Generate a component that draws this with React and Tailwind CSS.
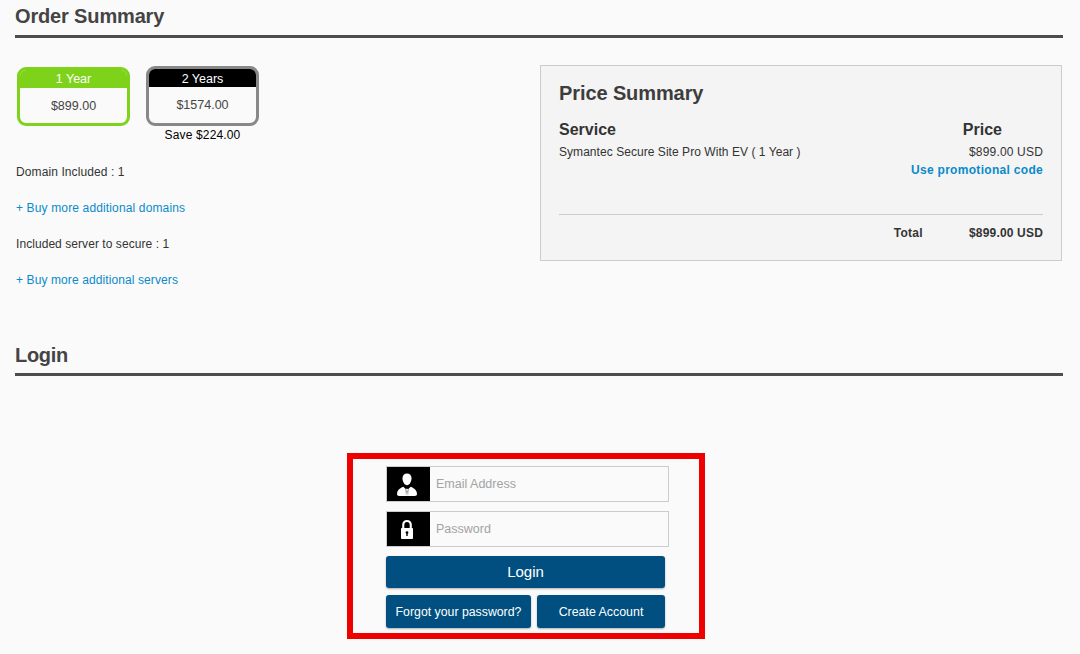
import React from 'react';

const PlanCard = ({ label, price, border, head, className }) => (
    <div className={`w-[113px] border-[3px] rounded-[9px] overflow-hidden bg-[#fafafa] ${border} ${className}`}>
        <div className={`h-[18px] text-center text-white text-[12.5px] ${head}`}>{label}</div>
        <div className="h-[38px] text-center text-[12.5px] leading-[36px] text-[#444]">{price}</div>
    </div>
);

const UserIcon = () => (
    <svg width="20" height="23" viewBox="0 0 20 23" fill="#fff">
        <path d="M10 0.500c2.700 0 4.500 2 4.500 4.800 0 3.200-1.900 7-4.500 7s-4.500-3.800-4.500-7C5.500 2.500 7.300 0.500 10 0.500z" />
        <path d="M6.300 13.800l2.400 2.200 0.300 7H2.300C0.800 23 0 22.200 0 21c0-3.500 2.800-5.800 6.300-7.200z" />
        <path d="M13.700 13.800l-2.400 2.200-0.300 7h6.700c1.500 0 2.300-0.800 2.300-2 0-3.500-2.800-5.800-6.300-7.200z" />
        <path d="M9.300 15.800h1.400l0.300 1.300-0.400 0.900 0.400 5H9l0.400-5-0.400-0.900z" />
    </svg>
);

const LockIcon = () => (
    <svg width="12" height="19" viewBox="0 0 12 19" fill="#fff">
        <path fillRule="evenodd" d="M6 0c2.900 0 4.800 2 4.800 4.800V8h0.400c0.500 0 0.800 0.300 0.800 0.800v9.400c0 0.500-0.300 0.800-0.800 0.800H0.800C0.300 19 0 18.700 0 18.200V8.800C0 8.300 0.300 8 0.800 8h0.400V4.800C1.200 2 3.100 0 6 0zM3.300 8h5.400V4.900C8.700 3.200 7.700 2.100 6 2.100S3.300 3.200 3.300 4.900V8zM6 11.200c-0.800 0-1.400 0.600-1.400 1.300 0 0.500 0.300 1 0.700 1.200V16h1.400v-2.300c0.400-0.200 0.700-0.700 0.700-1.200 0-0.700-0.600-1.300-1.400-1.300z" />
    </svg>
);

const Field = ({ icon, placeholder, type, className }) => (
    <div className={`w-[283px] h-[36px] flex border border-[#ccc] bg-[#fafafa] ${className}`}>
        <div className="w-[43px] pr-[3px] bg-black flex items-center justify-center shrink-0">{icon}</div>
        <input
            type={type}
            placeholder={placeholder}
            className="flex-1 min-w-0 pl-[6px] text-[12.5px] bg-transparent outline-none placeholder:text-[#a3a3a3]"
        />
    </div>
);

const App = () => {
    return (
        <div className="w-[1080px] h-[654px] overflow-hidden bg-[#fafafa] px-[15px] font-['Liberation_Sans',Arial,sans-serif] text-[#333]">
            <h2 className="h-[38px] pt-[4px] border-b-[3px] border-[#4d4d4d] text-[20px] leading-[24px] font-bold text-[#444] w-[1048px] tracking-[-0.15px]">Order Summary</h2>

            <div className="flex justify-between w-[1047px] pt-[27px] h-[305px]">
                <div className="pl-[2px]">
                    <div className="flex items-start">
                        <div className="pt-[2px]">
                            <PlanCard label="1 Year" price="$899.00" border="border-[#7ed31a]" head="bg-[#7ed31a] leading-[18px]" className="h-[59px]" />
                        </div>
                        <div className="ml-[16px] pt-[1px]">
                            <PlanCard label="2 Years" price="$1574.00" border="border-[#888]" head="bg-black leading-[20px]" className="h-[60px]" />
                            <div className="text-center text-[12px] leading-[18px] text-black tracking-[0.15px]">Save $224.00</div>
                        </div>
                    </div>
                    <div className="-ml-[1px] mt-[19px] text-[12px] leading-[18px] text-[#333] tracking-[0.1px]">Domain Included : 1</div>
                    <a className="-ml-[1px] block mt-[18px] text-[12px] leading-[18px] text-[#0a8acb] tracking-[0.14px]">+ Buy more additional domains</a>
                    <div className="-ml-[1px] mt-[18px] text-[12px] leading-[18px] text-[#333] tracking-[0.06px]">Included server to secure : 1</div>
                    <a className="-ml-[1px] block mt-[18px] text-[12px] leading-[18px] text-[#0a8acb] tracking-[0.1px]">+ Buy more additional servers</a>
                </div>

                <div className="w-[522px] h-[196px] border border-[#ccc] bg-[#f4f4f4] px-[18px] pt-[14px]">
                    <h3 className="text-[20px] leading-[26px] font-bold text-[#3d3d3d] tracking-[-0.1px]">Price Summary</h3>
                    <div className="flex justify-between mt-[15px]">
                        <div>
                            <div className="text-[16px] leading-[18px] font-bold">Service</div>
                            <div className="mt-[5px] text-[12px] leading-[16px] tracking-[0.05px]">Symantec Secure Site Pro With EV ( 1 Year )</div>
                        </div>
                        <div className="text-right">
                            <div className="text-[16px] leading-[18px] font-bold pr-[41px]">Price</div>
                            <div className="mt-[5px] text-[12px] leading-[16px] tracking-[0.18px]">$899.00 USD</div>
                            <a className="block mt-[2px] text-[12px] leading-[16px] font-bold text-[#0a8acb] tracking-[0.3px]">Use promotional code</a>
                        </div>
                    </div>
                    <div className="mt-[36px] border-t border-[#ccc] pt-[10px] flex justify-end text-[12px] leading-[16px] font-bold">
                        <span className="mr-[46px] tracking-[0.3px]">Total</span>
                        <span className="tracking-[0.18px]">$899.00 USD</span>
                    </div>
                </div>
            </div>

            <h2 className="h-[33px] border-b-[3px] border-[#4d4d4d] text-[20px] leading-[24px] font-bold text-[#444] w-[1048px] tracking-[-0.3px]">Login</h2>

            <div className="mt-[77px] ml-[332px] w-[358px] h-[186px] border-[6px] border-[#ee0000] pl-[33px] pt-[7px]">
                <Field icon={<UserIcon />} placeholder="Email Address" type="text" />
                <Field icon={<LockIcon />} placeholder="Password" type="password" className="mt-[9px]" />
                <button className="block mt-[9px] w-[279px] h-[32px] rounded-[3px] bg-[#004f80] text-white text-[15px] shadow-[0_1px_2px_rgba(0,0,0,0.3)]">Login</button>
                <div className="flex gap-[6px] mt-[7px]">
                    <button className="w-[145px] h-[33px] pt-[1px] rounded-[3px] bg-[#004f80] text-white text-[12.3px] shadow-[0_1px_2px_rgba(0,0,0,0.3)]">Forgot your password?</button>
                    <button className="w-[128px] h-[33px] pt-[1px] rounded-[3px] bg-[#004f80] text-white text-[12.4px] shadow-[0_1px_2px_rgba(0,0,0,0.3)]">Create Account</button>
                </div>
            </div>
        </div>
    );
};

export default App;
